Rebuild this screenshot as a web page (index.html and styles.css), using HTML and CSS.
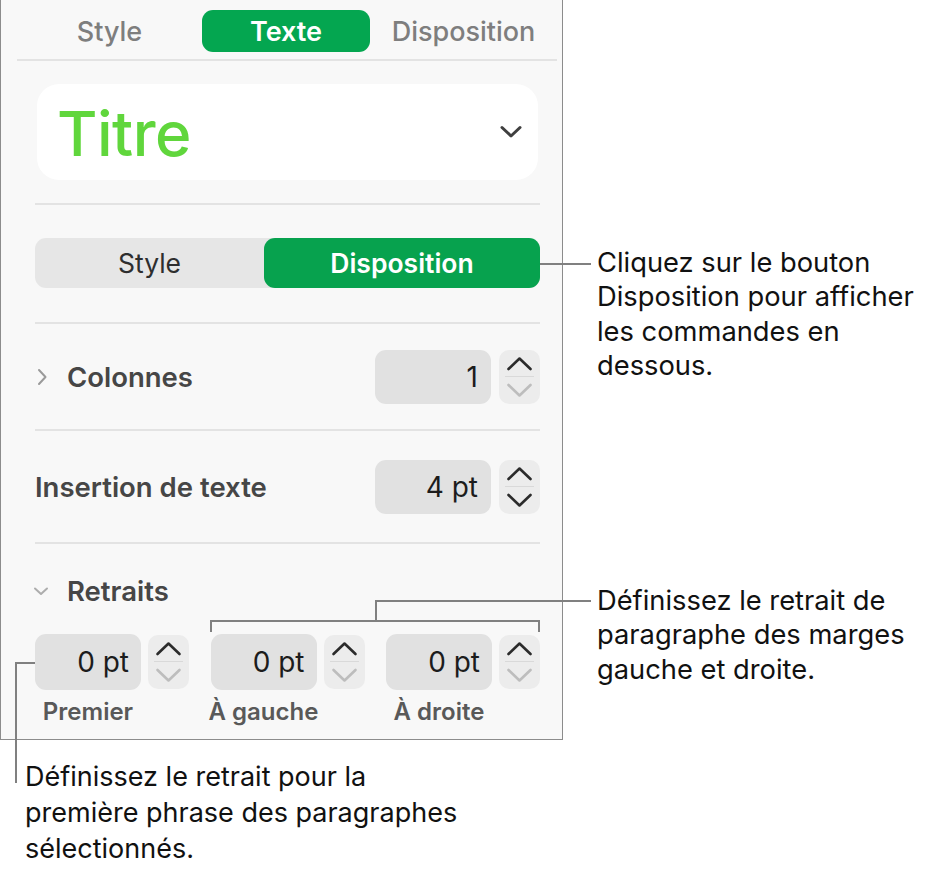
FILE: index.html
```html
<!DOCTYPE html>
<html lang="fr">
<head>
<meta charset="utf-8">
<title>Texte – Disposition</title>
<link rel="stylesheet" href="styles.css">
</head>
<body>
<div class="page">
  <div class="panel">
    <div class="tabs">
      <div class="tab">Style</div>
      <div class="tab active">Texte</div>
      <div class="tab">Disposition</div>
    </div>
    <div class="rule rule-wide"></div>

    <div class="title-box">
      <span class="title">Titre</span>
      <svg class="title-chev" width="24" height="16" viewBox="0 0 24 16"><path d="M3 3.5 L12 12 L21 3.5" fill="none" stroke="#3f3f3f" stroke-width="3" stroke-linecap="round" stroke-linejoin="round"/></svg>
    </div>
    <div class="rule rule-a"></div>

    <div class="seg">
      <div class="seg-item">Style</div>
      <div class="seg-item on">Disposition</div>
    </div>
    <div class="rule rule-b"></div>

    <div class="row row-cols">
      <div class="label">
        <span class="disc"><svg width="12" height="20" viewBox="0 0 12 20"><path d="M3 3 L9.5 10 L3 17" fill="none" stroke="#9a9a9a" stroke-width="2" stroke-linecap="round" stroke-linejoin="round"/></svg></span>
        Colonnes
      </div>
      <div class="field">1</div>
      <div class="stepper">
        <svg width="41" height="54" viewBox="0 0 41 54"><path d="M9.5 19 L20.5 8.5 L31.5 19" fill="none" stroke="#2b2b2b" stroke-width="2.6" stroke-linecap="round" stroke-linejoin="round"/><line x1="6" y1="26.5" x2="35" y2="26.5" stroke="#d9d9d9" stroke-width="1"/><path d="M9.5 35 L20.5 45.5 L31.5 35" fill="none" stroke="#bdbdbd" stroke-width="2.6" stroke-linecap="round" stroke-linejoin="round"/></svg>
      </div>
    </div>
    <div class="rule rule-c"></div>

    <div class="row row-ins">
      <div class="label label-plain">Insertion de texte</div>
      <div class="field">4 pt</div>
      <div class="stepper">
        <svg width="41" height="54" viewBox="0 0 41 54"><path d="M9.5 19 L20.5 8.5 L31.5 19" fill="none" stroke="#2b2b2b" stroke-width="2.6" stroke-linecap="round" stroke-linejoin="round"/><line x1="6" y1="26.5" x2="35" y2="26.5" stroke="#d9d9d9" stroke-width="1"/><path d="M9.5 35 L20.5 45.5 L31.5 35" fill="none" stroke="#2b2b2b" stroke-width="2.6" stroke-linecap="round" stroke-linejoin="round"/></svg>
      </div>
    </div>
    <div class="rule rule-d"></div>

    <div class="section-head">
      <span class="disc disc-down"><svg width="16" height="12" viewBox="0 0 16 12"><path d="M2 3.5 L8 9 L14 3.5" fill="none" stroke="#adadad" stroke-width="2" stroke-linecap="round" stroke-linejoin="round"/></svg></span>
      Retraits
    </div>

    <div class="indents">
      <div class="indent">
        <div class="field small">0 pt</div>
        <div class="stepper">
          <svg width="41" height="54" viewBox="0 0 41 54"><path d="M9.5 19 L20.5 8.5 L31.5 19" fill="none" stroke="#2b2b2b" stroke-width="2.6" stroke-linecap="round" stroke-linejoin="round"/><line x1="6" y1="26.5" x2="35" y2="26.5" stroke="#d9d9d9" stroke-width="1"/><path d="M9.5 35 L20.5 45.5 L31.5 35" fill="none" stroke="#bdbdbd" stroke-width="2.6" stroke-linecap="round" stroke-linejoin="round"/></svg>
        </div>
        <div class="sub">Premier</div>
      </div>
      <div class="indent">
        <div class="field small">0 pt</div>
        <div class="stepper">
          <svg width="41" height="54" viewBox="0 0 41 54"><path d="M9.5 19 L20.5 8.5 L31.5 19" fill="none" stroke="#2b2b2b" stroke-width="2.6" stroke-linecap="round" stroke-linejoin="round"/><line x1="6" y1="26.5" x2="35" y2="26.5" stroke="#d9d9d9" stroke-width="1"/><path d="M9.5 35 L20.5 45.5 L31.5 35" fill="none" stroke="#bdbdbd" stroke-width="2.6" stroke-linecap="round" stroke-linejoin="round"/></svg>
        </div>
        <div class="sub">À gauche</div>
      </div>
      <div class="indent">
        <div class="field small">0 pt</div>
        <div class="stepper">
          <svg width="41" height="54" viewBox="0 0 41 54"><path d="M9.5 19 L20.5 8.5 L31.5 19" fill="none" stroke="#2b2b2b" stroke-width="2.6" stroke-linecap="round" stroke-linejoin="round"/><line x1="6" y1="26.5" x2="35" y2="26.5" stroke="#d9d9d9" stroke-width="1"/><path d="M9.5 35 L20.5 45.5 L31.5 35" fill="none" stroke="#bdbdbd" stroke-width="2.6" stroke-linecap="round" stroke-linejoin="round"/></svg>
        </div>
        <div class="sub">À droite</div>
      </div>
    </div>
  </div>

  <div class="notes">
    <p class="note note-1">Cliquez sur le bouton<br>Disposition pour afficher<br>les commandes en<br>dessous.</p>
    <p class="note note-2">Définissez le retrait de<br>paragraphe des marges<br>gauche et droite.</p>
  </div>

  <p class="note note-3">Définissez le retrait pour la<br>première phrase des paragraphes<br>sélectionnés.</p>

  <svg class="leaders" width="931" height="870" viewBox="0 0 931 870">
    <g fill="none" stroke="#808080" stroke-width="2">
      <path d="M540 264 H591"/>
      <path d="M591 601 H376 V621"/>
      <path d="M211 632 V621 H539 V632"/>
      <path d="M35 663 H16 V783"/>
    </g>
  </svg>
</div>
</body>
</html>
```

FILE: styles.css
```css
html, body {
  margin: 0;
  padding: 0;
  background: #ffffff;
}

body {
  font-family: Inter, "Noto Sans", "Liberation Sans", sans-serif;
  color: #111;
}

.page {
  position: relative;
  width: 931px;
  height: 870px;
  display: grid;
  grid-template-columns: 563px 1fr;
  grid-template-rows: 740px auto;
  column-gap: 34px;
  overflow: hidden;
}

/* ---------- panel ---------- */
.panel {
  box-sizing: border-box;
  height: 740px;
  background: #f8f8f8;
  border: 1px solid #8c8c8c;
  border-top: none;
  padding: 10px 22px 0 34px;
}

.tabs {
  display: grid;
  grid-template-columns: 185px 168px 187px;
  height: 42px;
  margin: 0 -17px 0 -18px;
}

.tab {
  display: flex;
  align-items: center;
  justify-content: center;
  font-size: 27px;
  font-weight: 500;
  color: #7e7e7e;
}

.tab.active {
  background: #04a650;
  color: #fff;
  border-radius: 11px;
  font-weight: 600;
}

.rule {
  height: 2px;
  background: #e3e3e3;
}

.rule-wide { margin: 7px -17px 0 -18px; }
.rule-a { margin-top: 23px; }
.rule-b { margin-top: 34px; }
.rule-c { margin-top: 25px; }
.rule-d { margin-top: 28px; }

.title-box {
  margin: 23px 2px 0;
  height: 96px;
  background: #fff;
  border-radius: 22px;
  display: flex;
  align-items: center;
  justify-content: space-between;
  padding: 0 15px 0 20px;
}

.title {
  font-size: 62px;
  font-weight: 500;
  color: #60d63c;
  letter-spacing: -0.5px;
  line-height: 1;
  margin-top: 4px;
}

.title-chev { display: block; }

.seg {
  margin-top: 33px;
  height: 50px;
  display: grid;
  grid-template-columns: 229px 1fr;
  background: #e6e6e6;
  border-radius: 11px;
}

.seg-item {
  display: flex;
  align-items: center;
  justify-content: center;
  font-size: 26.5px;
  color: #2e2e2e;
}

.seg-item.on {
  background: #07a24e;
  color: #fff;
  font-weight: 600;
  border-radius: 11px;
}

.row {
  display: flex;
  align-items: center;
  height: 54px;
}

.row-cols { margin-top: 26px; }
.row-ins { margin-top: 29px; }

.label {
  flex: 1;
  display: flex;
  align-items: center;
  font-size: 27.5px;
  font-weight: 600;
  color: #464646;
}

.label-plain { margin-left: 0; }

.disc {
  width: 31px;
  display: flex;
  align-items: center;
  padding-left: 1px;
}

.disc svg { display: block; }

.field {
  box-sizing: border-box;
  width: 116px;
  height: 54px;
  background: #e1e1e1;
  border-radius: 11px;
  display: flex;
  align-items: center;
  justify-content: flex-end;
  padding-right: 13px;
  font-size: 28px;
  color: #1c1c1c;
}

.field.small {
  width: 106px;
  height: 56px;
  padding-right: 12px;
}

.stepper {
  width: 41px;
  height: 54px;
  margin-left: 8px;
  background: #ececec;
  border-radius: 10px;
}

.stepper svg { display: block; }

.section-head {
  margin-top: 32px;
  height: 30px;
  display: flex;
  align-items: center;
  font-size: 27.5px;
  font-weight: 600;
  color: #464646;
}

.disc-down {
  margin-left: -3px;
  width: 34px;
}

.indents {
  margin-top: 28px;
  display: grid;
  grid-template-columns: repeat(3, 154px);
  column-gap: 21.5px;
}

.indent {
  display: grid;
  grid-template-columns: 106px 41px;
  column-gap: 7px;
  row-gap: 9px;
  align-items: center;
}

.indent .stepper { margin-left: 0; }

.sub {
  grid-column: 1;
  display: flex;
  justify-content: center;
  white-space: nowrap;
  font-size: 24px;
  font-weight: 600;
  color: #595959;
  line-height: 26px;
}

/* ---------- callouts ---------- */
.notes {
  display: flex;
  flex-direction: column;
}

.note {
  margin: 0;
  font-size: 27.3px;
  line-height: 34.3px;
  color: #111;
  white-space: nowrap;
}

.note-1 { margin-top: 246px; }
.note-2 { margin-top: 201px; }

.note-3 {
  grid-column: 1 / -1;
  margin: 19px 0 0 25px;
  font-size: 27px;
  line-height: 36px;
}

.leaders {
  position: absolute;
  left: 0;
  top: 0;
  pointer-events: none;
}
```
